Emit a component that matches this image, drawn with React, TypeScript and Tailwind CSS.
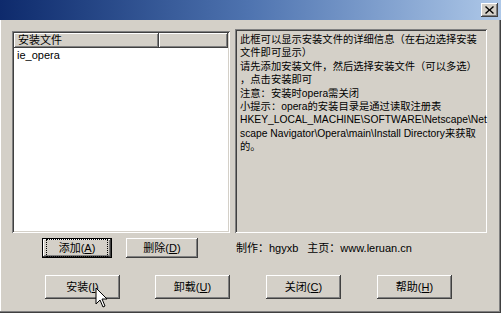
const font = { fontFamily: '"Liberation Sans", "Noto Sans CJK SC", sans-serif' };

function Btn({ label, k, w, h, focus }: { label: string; k: string; w: string; h: string; focus?: boolean }) {
  return (
    <div
      className={`${w} ${h} flex items-center justify-center bg-[#d4d0c8] text-[11px] text-black ${
        focus
          ? 'border border-black shadow-[inset_-1px_-1px_#404040,inset_1px_1px_#fff,inset_-2px_-2px_#808080]'
          : 'shadow-[inset_-1px_-1px_#404040,inset_1px_1px_#fff,inset_-2px_-2px_#808080]'
      }`}
    >
      <div
        className={`flex h-full w-full items-center justify-center ${
          focus ? 'm-[3px] border border-dotted border-black' : ''
        }`}
      >
        {label}(<span className="underline underline-offset-1">{k}</span>)
      </div>
    </div>
  );
}

function Cursor() {
  return (
    <svg className="absolute left-[95px] top-[287px]" width="14" height="22" viewBox="0 0 14 22">
      <path
        d="M1 1 L1 17 L5 13 L8 20 L10 19 L7 12 L12 12 Z"
        fill="#fff"
        stroke="#000"
        strokeWidth="1"
        strokeLinejoin="miter"
      />
    </svg>
  );
}

export default function App() {
  return (
    <div
      className="relative flex h-[313px] w-[501px] flex-col overflow-hidden bg-[#d4d0c8] shadow-[inset_-1px_-1px_#404040,inset_-2px_-2px_#808080,inset_1px_1px_#fff]"
      style={font}
    >
      {/* title bar */}
      <div className="flex h-[20px] items-center justify-end bg-gradient-to-r from-[#0e2a6c] via-[#4f74b0] to-[#aec8e8] pr-[3px]">
        <div className="flex h-[14px] w-[17px] items-center justify-center bg-[#d4d0c8] shadow-[inset_-1px_-1px_#404040,inset_1px_1px_#fff,inset_-2px_-2px_#808080]">
          <svg width="9" height="8" viewBox="0 0 9 8">
            <path d="M1 0 L4.5 3.2 L8 0 L9 1 L5.6 4 L9 7 L8 8 L4.5 4.8 L1 8 L0 7 L3.4 4 L0 1 Z" fill="#000" />
          </svg>
        </div>
      </div>

      {/* panes */}
      <div className="mt-[9px] flex items-end pl-[12px]">
        {/* list view */}
        <div className="flex h-[202px] w-[218px] flex-col bg-white p-[2px] shadow-[inset_1px_1px_#808080,inset_-1px_-1px_#fff,inset_2px_2px_#404040,inset_-2px_-2px_#d4d0c8]">
          <div className="flex h-[15px] text-[11px] text-black">
            <div className="flex w-[145px] items-center bg-[#d4d0c8] pl-[4px] shadow-[inset_-1px_-1px_#404040,inset_1px_1px_#fff,inset_-2px_-2px_#808080]">
              安装文件
            </div>
            <div className="flex-1 bg-[#d4d0c8] shadow-[inset_-1px_-1px_#404040,inset_1px_1px_#fff,inset_-2px_-2px_#808080]" />
          </div>
          <div className="pl-[3px] pt-[1px] text-[11px] leading-[13px] text-black">ie_opera</div>
        </div>

        {/* info box */}
        <div className="ml-[5px] h-[204px] w-[252px] px-[5px] pt-[4px] text-[10.3px] leading-[13.4px] text-black shadow-[inset_1px_1px_#808080,inset_-1px_-1px_#fff,inset_2px_2px_#404040,inset_-2px_-2px_#d4d0c8]">
          <div>此框可以显示安装文件的详细信息（在右边选择安装</div>
          <div>文件即可显示）</div>
          <div>请先添加安装文件，然后选择安装文件（可以多选）</div>
          <div>，点击安装即可</div>
          <div>注意：安装时opera需关闭</div>
          <div>小提示：opera的安装目录是通过读取注册表</div>
          <div className="whitespace-nowrap">HKEY_LOCAL_MACHINE\SOFTWARE\Netscape\Net</div>
          <div className="whitespace-nowrap">scape Navigator\Opera\main\Install Directory来获取</div>
          <div>的。</div>
        </div>
      </div>

      {/* add / remove row */}
      <div className="mt-[5px] flex items-center">
        <div className="ml-[42px]">
          <Btn label="添加" k="A" w="w-[70px]" h="h-[20px]" focus />
        </div>
        <div className="ml-[14px]">
          <Btn label="删除" k="D" w="w-[72px]" h="h-[20px]" />
        </div>
        <div className="ml-[38px] flex text-[11px] text-black">
          <span>制作：hgyxb</span>
          <span className="ml-[9px]">主页：www.leruan.cn</span>
        </div>
      </div>

      {/* bottom buttons */}
      <div className="mt-[17px] flex pl-[45px]">
        <Btn label="安装" k="I" w="w-[75px]" h="h-[24px]" />
        <div className="ml-[35px]">
          <Btn label="卸载" k="U" w="w-[75px]" h="h-[24px]" />
        </div>
        <div className="ml-[36px]">
          <Btn label="关闭" k="C" w="w-[75px]" h="h-[24px]" />
        </div>
        <div className="ml-[36px]">
          <Btn label="帮助" k="H" w="w-[75px]" h="h-[24px]" />
        </div>
      </div>

      <Cursor />
    </div>
  );
}
